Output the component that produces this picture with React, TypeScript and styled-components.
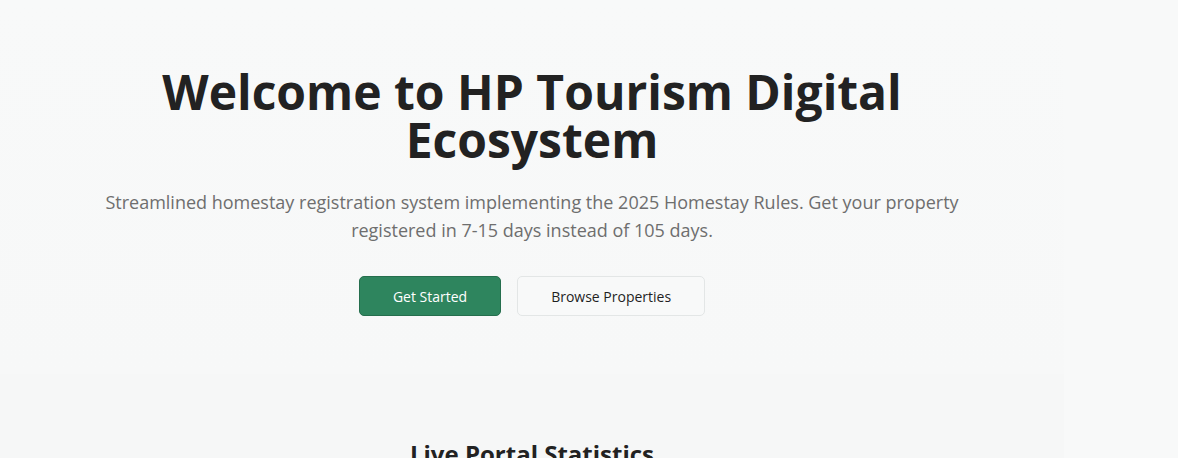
import styled, { createGlobalStyle } from 'styled-components';

const GlobalStyle = createGlobalStyle`
  * { box-sizing: border-box; }
  body {
    margin: 0;
    font-family: "Open Sans", "Liberation Sans", sans-serif;
    background: #f8f9f9;
    color: #222;
  }
`;

const Page = styled.div`
  min-height: 458px;
  padding-right: 114px;
`;

const Hero = styled.section`
  padding: 68px 16px 58px;
  display: flex;
  flex-direction: column;
  align-items: center;
  text-align: center;
  background: linear-gradient(180deg, #f8f9f9 0%, #f7f8f8 100%);
`;

const Title = styled.h1`
  margin: 0;
  max-width: 768px;
  font-size: 48px;
  line-height: 48px;
  font-weight: 700;
  color: #222222;
`;

const Subtitle = styled.p`
  margin: 24px 0 0;
  max-width: 896px;
  font-size: 18px;
  line-height: 28px;
  color: #6e6e6e;
`;

const Actions = styled.div`
  display: flex;
  gap: 16px;
  margin-top: 32px;
`;

const Button = styled.button<{ primary?: boolean }>`
  height: 40px;
  padding: 0 33px;
  border-radius: 5px;
  font-family: inherit;
  font-size: 14px;
  font-weight: 500;
  cursor: pointer;
  border: 1px solid ${p => (p.primary ? '#256e4d' : '#e3e6e6')};
  background: ${p => (p.primary ? '#2e855e' : '#f8f9f9')};
  color: ${p => (p.primary ? '#ffffff' : '#1f1f1f')};
`;

const Stats = styled.section`
  padding: 64px 16px 0;
  background: #f6f7f7;
  text-align: center;
`;

const StatsTitle = styled.h2`
  margin: 0;
  font-size: 24px;
  line-height: 32px;
  font-weight: 700;
  color: #222222;
`;

export default function App() {
  return (
    <>
      <GlobalStyle />
      <Page>
        <Hero>
          <Title>Welcome to HP Tourism Digital Ecosystem</Title>
          <Subtitle>
            Streamlined homestay registration system implementing the 2025 Homestay Rules. Get your
            property registered in 7-15 days instead of 105 days.
          </Subtitle>
          <Actions>
            <Button primary>Get Started</Button>
            <Button>Browse Properties</Button>
          </Actions>
        </Hero>
        <Stats>
          <StatsTitle>Live Portal Statistics</StatsTitle>
        </Stats>
      </Page>
    </>
  );
}
